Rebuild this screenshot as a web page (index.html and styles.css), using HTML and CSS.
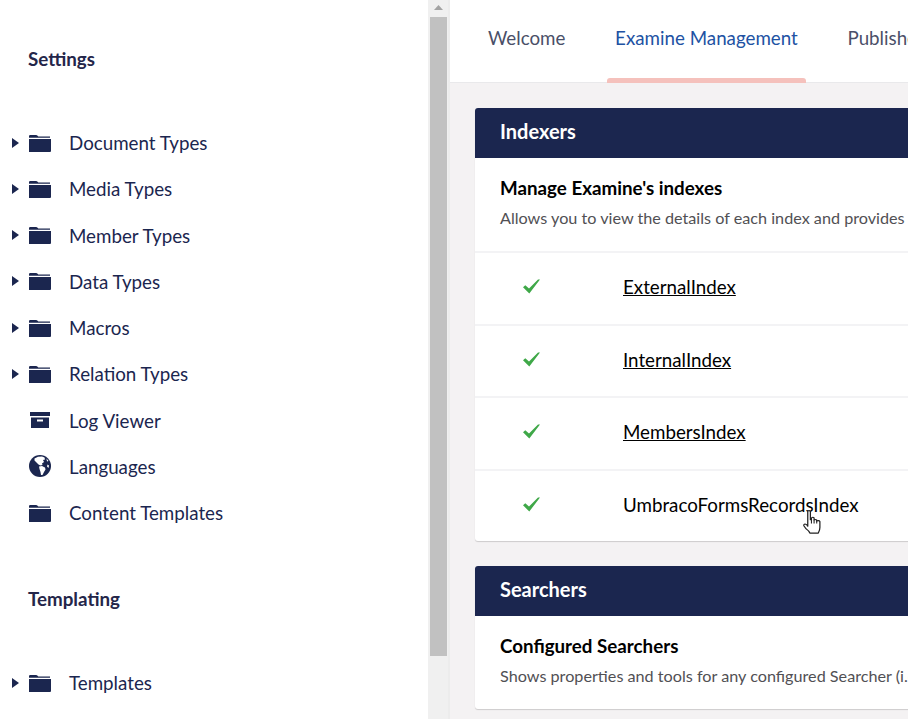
FILE: index.html
```html
<!DOCTYPE html>
<html lang="en">
<head>
<meta charset="utf-8">
<title>Examine Management</title>
<link rel="stylesheet" href="styles.css">
</head>
<body>
<svg class="defs" width="0" height="0" aria-hidden="true">
  <symbol id="folder" viewBox="0 0 22 18">
    <path d="M0 18V2.200Q0 1 1.200 1H7Q8 1 8.600 1.700L9.300 2.500H21V3.700H0V5H22V17Q22 18 21 18Z" fill="currentColor"/>
  </symbol>
  <symbol id="caret" viewBox="0 0 7 10">
    <path d="M0 0L7 5L0 10Z" fill="currentColor"/>
  </symbol>
  <symbol id="check" viewBox="0 0 17 15">
    <path d="M0 8.300L2.300 6.300L6 9.500L15 0.500L17 0.500L6.300 14.500Z" fill="currentColor"/>
  </symbol>
</svg>

<div class="app">
  <aside class="sidebar">
    <div class="tree">
      <h3 class="section-title section-first">Settings</h3>
      <ul class="tree-list">
        <li class="tree-row"><svg class="caret"><use href="#caret"/></svg><svg class="ico"><use href="#folder"/></svg><span>Document Types</span></li>
        <li class="tree-row"><svg class="caret"><use href="#caret"/></svg><svg class="ico"><use href="#folder"/></svg><span>Media Types</span></li>
        <li class="tree-row"><svg class="caret"><use href="#caret"/></svg><svg class="ico"><use href="#folder"/></svg><span>Member Types</span></li>
        <li class="tree-row"><svg class="caret"><use href="#caret"/></svg><svg class="ico"><use href="#folder"/></svg><span>Data Types</span></li>
        <li class="tree-row"><svg class="caret"><use href="#caret"/></svg><svg class="ico"><use href="#folder"/></svg><span>Macros</span></li>
        <li class="tree-row"><svg class="caret"><use href="#caret"/></svg><svg class="ico"><use href="#folder"/></svg><span>Relation Types</span></li>
        <li class="tree-row"><span class="caret-gap"></span>
          <svg class="ico" viewBox="0 0 22 18"><path d="M1 1H21V5H1ZM2 6.500H20V17H2ZM8 8.500V10.500H14V8.500Z" fill-rule="evenodd" fill="currentColor"/></svg>
          <span>Log Viewer</span></li>
        <li class="tree-row"><span class="caret-gap"></span>
          <svg class="ico ico-globe" viewBox="0 0 22 22"><circle cx="11" cy="11" r="11" fill="currentColor"/><path d="M5.500 3.500L9 1.800L13 1.500L15.500 2.500L16 4.500L14 5L15 7L13 8.500L13.500 10L11.500 10.500L9.500 9.500L7.500 7.500L5.500 5.500ZM10 11.500L13 11L16 12.500L16.500 14.500L15 17L13.500 20L12 20L11.500 17L10.500 14ZM18.500 9.500L20 10.500L19.500 13L18 11.500ZM17.500 3.500L19.500 6L18 6.500Z" fill="#fff"/></svg>
          <span>Languages</span></li>
        <li class="tree-row"><span class="caret-gap"></span><svg class="ico"><use href="#folder"/></svg><span>Content Templates</span></li>
      </ul>
      <h3 class="section-title section-next">Templating</h3>
      <ul class="tree-list">
        <li class="tree-row"><svg class="caret"><use href="#caret"/></svg><svg class="ico"><use href="#folder"/></svg><span>Templates</span></li>
      </ul>
    </div>
    <div class="scrollbar">
      <svg class="scroll-arrow" viewBox="0 0 9 5"><path d="M4.500 0L9 5H0Z" fill="#a3a3a3"/></svg>
      <div class="scroll-thumb"></div>
    </div>
  </aside>

  <main class="main">
    <nav class="tabs">
      <a class="tab">Welcome</a>
      <a class="tab tab-active">Examine Management</a>
      <a class="tab">Published Status</a>
    </nav>
    <div class="content">
      <section class="card">
        <header class="card-head">Indexers</header>
        <div class="card-intro">
          <h4 class="intro-title">Manage Examine's indexes</h4>
          <p class="intro-text">Allows you to view the details of each index and provides some tools for managing the indexes</p>
        </div>
        <div class="index-row"><svg class="check"><use href="#check"/></svg><a class="index-link">ExternalIndex</a></div>
        <div class="index-row"><svg class="check"><use href="#check"/></svg><a class="index-link">InternalIndex</a></div>
        <div class="index-row"><svg class="check"><use href="#check"/></svg><a class="index-link">MembersIndex</a></div>
        <div class="index-row"><svg class="check"><use href="#check"/></svg><a class="index-link index-hover">UmbracoFormsRecordsIndex</a></div>
      </section>
      <section class="card">
        <header class="card-head">Searchers</header>
        <div class="card-intro">
          <h4 class="intro-title">Configured Searchers</h4>
          <p class="intro-text">Shows properties and tools for any configured Searcher (i.e. such as a multi-index searcher)</p>
        </div>
      </section>
    </div>
  </main>
</div>

<svg class="pointer" viewBox="0 0 18 26" preserveAspectRatio="none"><path d="M4.500 2Q4.500 0.700 5.800 0.700Q7 0.700 7 2V10.500L8 10.500V8.500Q9.500 7.300 10.500 8.500V11Q12 9.500 13 11V12Q15 10.800 16 12.500V19Q16 22 14.500 25H6.500Q5.500 22.500 3 20.500L0.800 17Q0.500 15.300 2 15.200Q3.500 15.300 4.500 17.500Z" fill="#fff" stroke="#222" stroke-width="1.200" stroke-linejoin="round"/><path d="M8 10.500V14.500M10.500 11V14.500M13 12V14.500" stroke="#222" fill="none"/></svg>
</body>
</html>
```

FILE: styles.css
```css
* { box-sizing: border-box; }
html, body { margin: 0; height: 100%; overflow: hidden; }
body { font-family: Lato, "Open Sans", sans-serif; background: #fff; color: #1b264f; }
.defs { position: absolute; }
.app { display: flex; width: 908px; height: 719px; overflow: hidden; }

.sidebar { display: flex; flex: 0 0 450px; height: 719px; border-right: 2px solid #ececec; }
.tree { flex: 0 0 428px; height: 719px; overflow: hidden; }
.section-title { margin: 0 0 0 28px; font-size: 18.750px; line-height: 24px; font-weight: 700; color: #24264a; }
.section-first { padding-top: 47px; padding-bottom: 48.500px; }
.section-next { padding-top: 51px; padding-bottom: 49px; }
.tree-list { list-style: none; margin: 0; padding: 0; }
.tree-row { display: flex; align-items: center; height: 46.250px; padding-left: 12px; font-size: 18.750px; color: #1b264f; }
.caret { width: 7px; height: 10px; flex: none; margin-right: 10px; color: #1b264f; }
.caret-gap { width: 17px; flex: none; }
.ico { width: 22px; height: 18px; flex: none; margin-right: 18px; color: #1b264f; }
.ico-globe { height: 22px; }

.scrollbar { flex: 0 0 20px; background: #f0f0f0; display: flex; flex-direction: column; align-items: center; }
.scroll-arrow { width: 9px; height: 5px; margin-top: 5px; flex: none; }
.scroll-thumb { width: 17px; height: 639px; margin-top: 7px; background: #c1c1c1; }

.main { flex: 1; min-width: 0; height: 719px; overflow: hidden; background: #f4f2f3; }
.tabs { display: flex; height: 83px; padding-left: 30px; gap: 33.700px; background: #fff; border-bottom: 1px solid #e9e9eb; white-space: nowrap; }
.tab { position: relative; padding: 0 8px; font-size: 18.750px; line-height: 75px; color: #4a4f68; }
.tab-active { color: #2152a3; }
.tab-active::after { content: ""; position: absolute; left: 0; right: 0; bottom: -1px; height: 5px; background: #f5c1bc; border-radius: 3px 3px 0 0; }

.content { padding: 25px 0 0 25px; width: 1100px; }
.card { background: #fff; border-radius: 3px; box-shadow: 0 1px 1px rgba(0,0,0,.16); margin-bottom: 24.500px; }
.card-head { height: 50px; padding-left: 25px; background: #1b264f; border-radius: 3px 3px 0 0; color: #fff; font-size: 20px; font-weight: 700; line-height: 47px; }
.card-intro { padding: 18px 25px 20px; height: 93px; }
.intro-title { margin: 0; font-size: 18.750px; line-height: 24px; font-weight: 700; color: #000; }
.intro-text { margin: 8px 0 0; font-size: 16.200px; line-height: 20px; color: #515054; white-space: nowrap; }
.index-row { display: flex; align-items: center; height: 72.500px; padding-left: 48px; padding-bottom: 3.500px; border-top: 2px solid #f3f3f5; }
.check { width: 17px; height: 15px; flex: none; margin-right: 83px; color: #3fa848; }
.index-link { font-size: 18.750px; color: #000; text-decoration: underline; }
.index-hover { text-decoration: none; }

.pointer { position: absolute; left: 803px; top: 510px; width: 19px; height: 24px; }
```
